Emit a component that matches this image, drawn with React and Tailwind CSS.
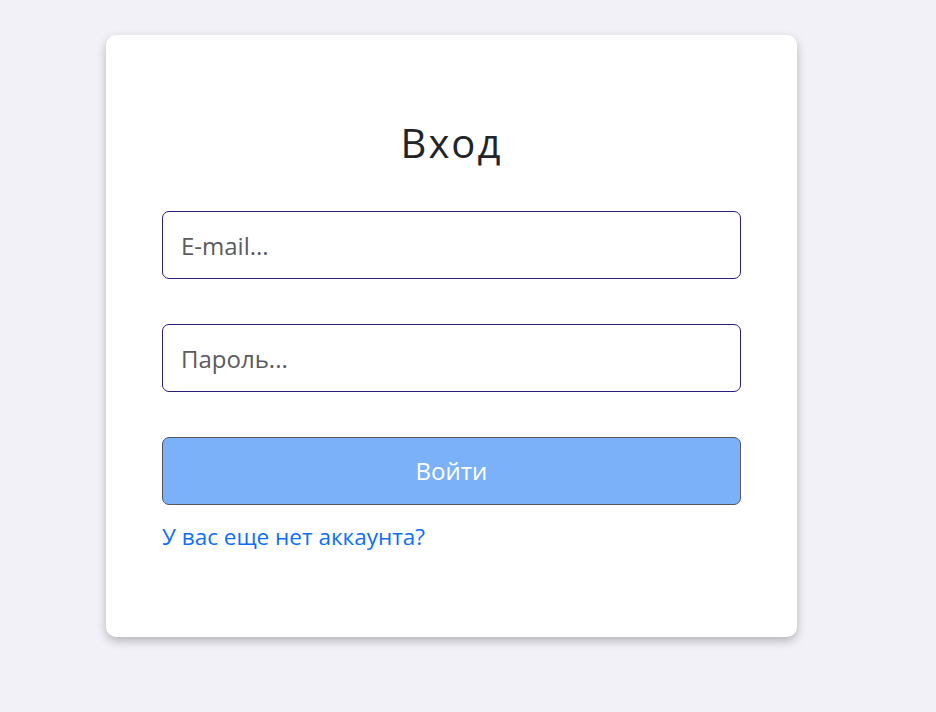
import React, { useState } from "react";

const App = () => {
  const [email, setEmail] = useState("");
  const [password, setPassword] = useState("");

  return (
    <div className="min-h-screen w-full bg-[#f2f1f7] pt-[35px] pl-[106px]" style={{ fontFamily: "'Open Sans', sans-serif" }}>
      <div className="w-[691px] rounded-[10px] bg-white px-[56px] pt-[84px] pb-[87px] shadow-[0_4px_10px_rgba(0,0,0,0.25)]">
        <h1 className="text-center text-[40px] leading-[48px] tracking-[2px] text-[#212529] mb-[44px]">
          Вход
        </h1>

        <div className="flex flex-col gap-[45px]">
          {/* Email */}
          <input
            type="email"
            value={email}
            onChange={(e) => setEmail(e.target.value)}
            placeholder="E-mail..."
            className="h-[68px] w-full rounded-[7px] border border-[#2b1c7d] px-[18px] text-[24px] text-[#333] placeholder:text-[#5b5b60] outline-none"
          />

          {/* Password */}
          <input
            type="password"
            value={password}
            onChange={(e) => setPassword(e.target.value)}
            placeholder="Пароль..."
            className="h-[68px] w-full rounded-[7px] border border-[#2b1c7d] px-[18px] text-[24px] text-[#333] placeholder:text-[#5b5b60] outline-none"
          />

          <button className="h-[68px] w-full rounded-[7px] border border-[#55575c] bg-[#7bb1f8] text-[24px] text-white">
            Войти
          </button>
        </div>

        <a href="#" className="mt-[19px] block text-[22.5px] leading-[26px] text-[#0d6efd]">
          У вас еще нет аккаунта?
        </a>
      </div>
    </div>
  );
};

export default App;
